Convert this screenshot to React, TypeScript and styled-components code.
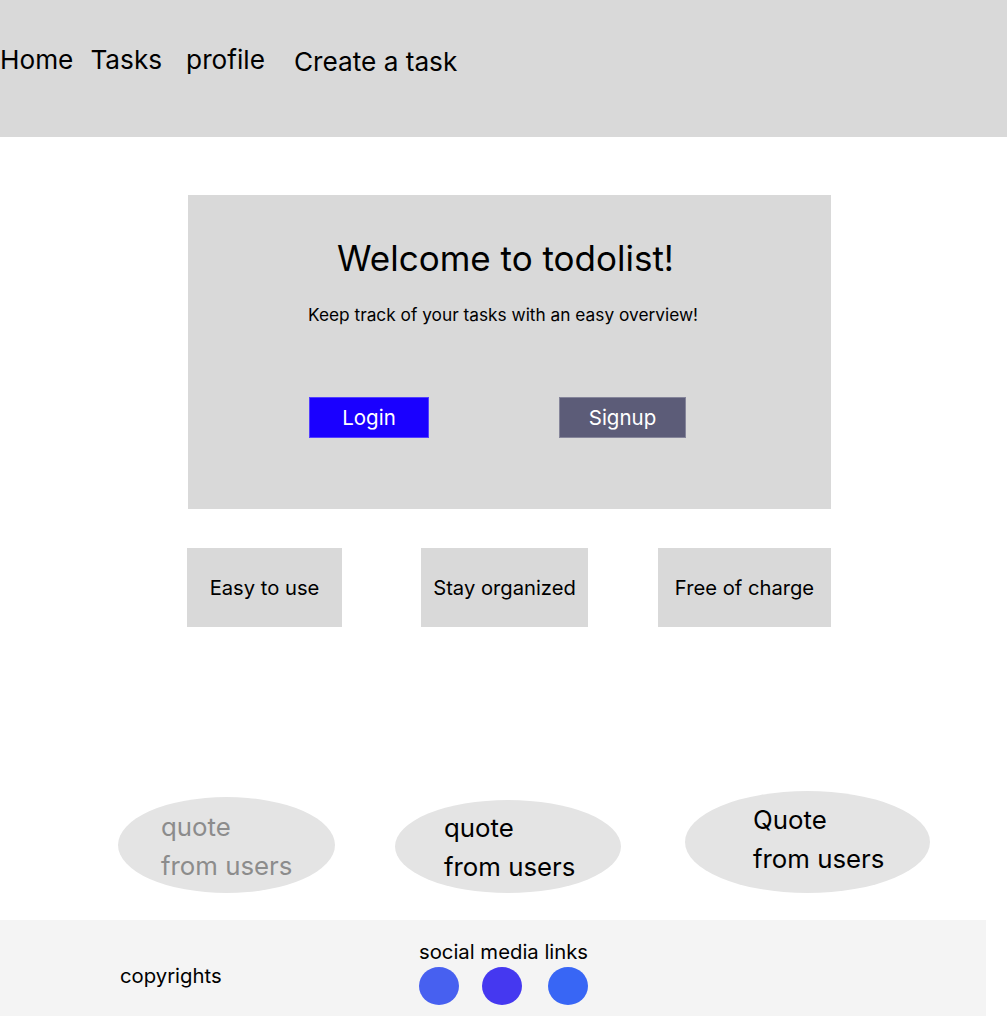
import styled, { createGlobalStyle } from "styled-components"

const GlobalStyle = createGlobalStyle`
	html, body {
		margin: 0;
		padding: 0;
		background: #ffffff;
		font-family: Inter, "Noto Sans", "Liberation Sans", sans-serif;
		color: #000000;
	}
`

const Page = styled.div`
	width: 1007px;
	min-height: 1016px;
	display: flex;
	flex-direction: column;
`

const Header = styled.header`
	height: 137px;
	background: #d9d9d9;
	display: flex;
	align-items: flex-start;
	padding-top: 45px;
	box-sizing: border-box;
`

const NavLink = styled.a<{ $ml?: number; $mt?: number }>`
	font-size: 26.2px;
	line-height: 30px;
	color: #000000;
	text-decoration: none;
	margin-left: ${p => p.$ml ?? 0}px;
	margin-top: ${p => p.$mt ?? 0}px;
`

const Hero = styled.section`
	margin: 58px 0 0 188px;
	width: 643px;
	height: 314px;
	background: #d9d9d9;
	display: flex;
	flex-direction: column;
	align-items: center;
	padding-top: 43px;
	box-sizing: border-box;
`

const Title = styled.h1`
	margin: 0;
	font-size: 35px;
	font-weight: 400;
	line-height: 41px;
	padding-right: 8px;
`

const Subtitle = styled.p`
	margin: 25px 0 0;
	font-size: 17.3px;
	line-height: 21px;
	padding-right: 13px;
`

const ButtonRow = styled.div`
	align-self: stretch;
	display: flex;
	gap: 130px;
	padding-left: 121px;
	margin-top: 72px;
`

const Button = styled.button<{ $color: string; $width: number }>`
	width: ${p => p.$width}px;
	height: 41px;
	border: 1px solid rgba(255, 255, 255, 0.25);
	background: ${p => p.$color};
	color: #ffffff;
	font-family: inherit;
	font-size: 20.5px;
	padding: 0;
	cursor: pointer;
`

const Features = styled.div`
	margin: 39px 0 0 187px;
	display: flex;
`

const Feature = styled.div<{ $width: number; $ml: number }>`
	width: ${p => p.$width}px;
	height: 79px;
	margin-left: ${p => p.$ml}px;
	background: #d9d9d9;
	display: flex;
	align-items: center;
	justify-content: center;
	font-size: 20.2px;
`

const Quotes = styled.div`
	margin-top: 164px;
	padding-left: 118px;
	display: flex;
	align-items: flex-end;
	height: 102px;
`

const Quote = styled.div<{ $w: number; $h: number; $pad: number; $ml: number; $shift?: number; $muted?: boolean }>`
	width: ${p => p.$w}px;
	height: ${p => p.$h}px;
	margin-left: ${p => p.$ml}px;
	border-radius: 50%;
	background: #e4e4e4;
	display: flex;
	align-items: center;
	padding-left: ${p => p.$pad}px;
	padding-top: ${p => Math.max(p.$shift ?? 0, 0)}px;
	padding-bottom: ${p => Math.max(-(p.$shift ?? 0), 0)}px;
	box-sizing: border-box;
	font-size: 25.8px;
	line-height: 39px;
	color: ${p => (p.$muted ? "#8c8c8c" : "#000000")};
`

const Footer = styled.footer`
	margin-top: 27px;
	width: 986px;
	height: 96px;
	background: #f4f4f4;
	display: flex;
	align-items: flex-start;
	padding-left: 120px;
	box-sizing: border-box;
`

const Copyright = styled.span`
	width: 299px;
	margin-top: 44px;
	font-size: 20.3px;
	line-height: 24px;
`

const Social = styled.div`
	margin-top: 20px;
	display: flex;
	flex-direction: column;
`

const SocialTitle = styled.span`
	font-size: 20.3px;
	line-height: 24px;
`

const Dots = styled.div`
	display: flex;
	margin-top: 3px;
`

const Dot = styled.span<{ $color: string; $ml: number }>`
	width: 40px;
	height: 38px;
	border-radius: 50%;
	background: ${p => p.$color};
	margin-left: ${p => p.$ml}px;
`

export default function App() {
	return (
		<Page>
			<GlobalStyle />
			<Header>
				<NavLink href="#">Home</NavLink>
				<NavLink href="#" $ml={17}>Tasks</NavLink>
				<NavLink href="#" $ml={24}>profile</NavLink>
				<NavLink href="#" $ml={29} $mt={2}>Create a task</NavLink>
			</Header>

			<Hero>
				<Title>Welcome to todolist!</Title>
				<Subtitle>Keep track of your tasks with an easy overview!</Subtitle>
				<ButtonRow>
					<Button $color="#1a00ff" $width={120}>Login</Button>
					<Button $color="#5c5c78" $width={127}>Signup</Button>
				</ButtonRow>
			</Hero>

			<Features>
				<Feature $width={155} $ml={0}>Easy to use</Feature>
				<Feature $width={167} $ml={79}>Stay organized</Feature>
				<Feature $width={173} $ml={70}>Free of charge</Feature>
			</Features>

			<Quotes>
				<Quote $w={217} $h={96} $pad={43} $ml={0} $shift={2} $muted>
					quote<br />from users
				</Quote>
				<Quote $w={226} $h={93} $pad={49} $ml={60}>
					quote<br />from users
				</Quote>
				<Quote $w={245} $h={102} $pad={68} $ml={64} $shift={-6}>
					Quote<br />from users
				</Quote>
			</Quotes>

			<Footer>
				<Copyright>copyrights</Copyright>
				<Social>
					<SocialTitle>social media links</SocialTitle>
					<Dots>
						<Dot $color="#4760f0" $ml={0} />
						<Dot $color="#4538f0" $ml={23} />
						<Dot $color="#3866f5" $ml={26} />
					</Dots>
				</Social>
			</Footer>
		</Page>
	)
}
